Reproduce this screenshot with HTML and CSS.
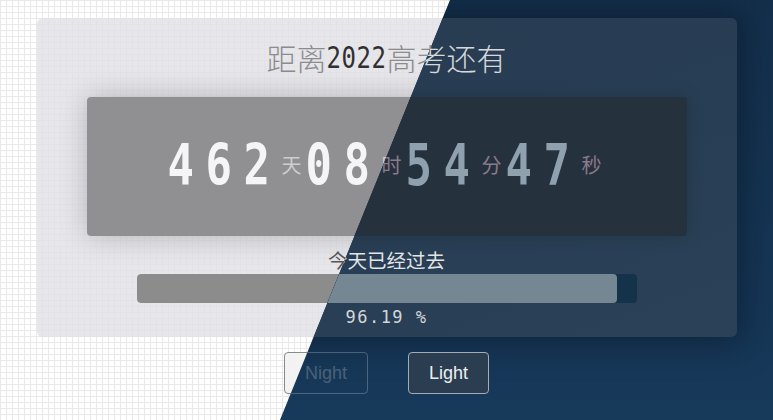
FILE: index.html
```html
<!DOCTYPE html>
<html lang="zh">
<head>
<meta charset="utf-8">
<title>距离2022高考还有</title>
<link rel="stylesheet" href="styles.css">
</head>
<body>
<div class="scene scene-light">
  <div class="card">
    <h1 class="title">距离<span class="year">2022</span>高考还有</h1>
    <div class="clock">
      <span class="num">462</span><span class="unit">天</span>
      <span class="num">08</span><span class="unit">时</span>
      <span class="num">54</span><span class="unit">分</span>
      <span class="num">47</span><span class="unit">秒</span>
    </div>
    <div class="label">今天已经过去</div>
    <div class="bar"><div class="fill" style="width:96.19%"></div></div>
    <div class="percent">96.19 %</div>
  </div>
  <div class="buttons">
    <button class="btn btn-night">Night</button>
    <button class="btn btn-light">Light</button>
  </div>
</div>
<div class="scene scene-dark" aria-hidden="true">
  <div class="card">
    <h1 class="title">距离<span class="year">2022</span>高考还有</h1>
    <div class="clock">
      <span class="num">462</span><span class="unit">天</span>
      <span class="num">08</span><span class="unit">时</span>
      <span class="num">54</span><span class="unit">分</span>
      <span class="num">47</span><span class="unit">秒</span>
    </div>
    <div class="label">今天已经过去</div>
    <div class="bar"><div class="fill" style="width:96.19%"></div></div>
    <div class="percent">96.19 %</div>
  </div>
  <div class="buttons">
    <button class="btn btn-night">Night</button>
    <button class="btn btn-light">Light</button>
  </div>
</div>
</body>
</html>
```
FILE: styles.css
```css
html, body {
  margin: 0;
  padding: 0;
  width: 773px;
  height: 420px;
  overflow: hidden;
}
body {
  position: relative;
  font-family: "Noto Sans CJK SC", "Noto Sans", sans-serif;
}
.scene {
  width: 773px;
  height: 420px;
  box-sizing: border-box;
  padding-top: 18px;
  display: flex;
  flex-direction: column;
  align-items: center;
}
.scene-light {
  background-color: #ffffff;
  background-image:
    linear-gradient(#e9e9e9 1px, transparent 1px),
    linear-gradient(90deg, #e9e9e9 1px, transparent 1px);
  background-size: 6px 6px;
}
.scene-dark {
  position: absolute;
  top: 0;
  left: 0;
  background: linear-gradient(180deg, #142f4b 0%, #17395a 100%);
  clip-path: polygon(450px 0, 773px 0, 773px 420px, 280px 420px);
}
.card {
  width: 700px;
  height: 319px;
  box-sizing: border-box;
  padding: 19px 50px 0;
  border-radius: 6px;
  display: flex;
  flex-direction: column;
  align-items: center;
}
.scene-light .card {
  background: rgba(226, 224, 230, 0.82);
}
.scene-dark .card {
  background: linear-gradient(160deg, #283c51 0%, #283e54 60%, #2a4157 100%);
  box-shadow: 0 0 32px 6px rgba(8, 22, 40, 0.55);
}
.title {
  margin: 0;
  font-size: 30px;
  line-height: 40px;
  font-weight: 300;
  letter-spacing: 0;
}
.scene-light .title { color: #8c8c8e; }
.scene-dark .title { color: #d6d8db; }
.year {
  display: inline-block;
  font-family: "DejaVu Sans Mono", monospace;
  font-size: 24px;
  line-height: 1;
  letter-spacing: 0.6px;
  transform: scaleY(1.25);
  transform-origin: 50% 20px;
  vertical-align: 2px;
}
.scene-light .year { color: #303032; }
.scene-dark .year { color: #e4e4e4; }
.clock {
  margin-top: 20px;
  width: 600px;
  height: 139px;
  box-sizing: border-box;
  padding-bottom: 3px;
  border-radius: 4px;
  display: flex;
  align-items: center;
  justify-content: center;
}
.scene-light .clock {
  background: rgba(134, 134, 138, 0.9);
  box-shadow: 0 0 28px rgba(0, 0, 0, 0.22);
}
.scene-dark .clock {
  background: #26313e;
  box-shadow: 0 0 18px rgba(0, 0, 0, 0.15);
}
.num {
  display: inline-block;
  font-family: "DejaVu Sans Mono", monospace;
  font-weight: bold;
  font-size: 44px;
  line-height: 1;
  letter-spacing: 11.5px;
  transform: scaleY(1.31);
}
.scene-light .num { color: #f5f5f7; }
.scene-dark .num { color: #8fa1af; }
.unit {
  font-size: 20px;
  line-height: 24px;
  margin-right: 4px;
}
.scene-light .unit { color: #cdcdcf; }
.scene-dark .unit { color: #8c7a8b; }
.label {
  margin-top: 12px;
  font-size: 19.5px;
  line-height: 24px;
}
.scene-light .label { color: #555557; }
.scene-dark .label { color: #e2e4e6; }
.bar {
  margin-top: 2px;
  width: 500px;
  height: 29px;
  border-radius: 4px;
  overflow: hidden;
}
.fill {
  height: 100%;
  border-radius: 4px;
}
.scene-light .bar { background: rgba(0, 0, 0, 0.12); }
.scene-light .fill { background: #8c8c8c; }
.scene-dark .bar { background: #15324b; }
.scene-dark .fill { background: #758792; }
.percent {
  margin-top: 4px;
  font-family: "DejaVu Sans Mono", monospace;
  font-size: 17px;
  line-height: 20px;
  letter-spacing: 1.5px;
}
.scene-light .percent { color: #555; }
.scene-dark .percent { color: #d4d6d8; }
.buttons {
  margin-top: 15px;
  display: flex;
  gap: 40px;
}
.btn {
  height: 42px;
  box-sizing: border-box;
  padding: 0 20px;
  border-radius: 4px;
  font-family: "Liberation Sans", Arial, sans-serif;
  font-size: 18px;
  line-height: 40px;
  cursor: pointer;
}
.scene-light .btn-night {
  background: rgba(242, 242, 242, 0.95);
  border: 1px solid #8a8a8a;
  color: #333;
}
.scene-light .btn-light {
  background: #f4f4f4;
  border: 1px solid #8a8a8a;
  color: #333;
}
.scene-dark .btn-night {
  background: transparent;
  border: 1px solid rgba(200, 210, 220, 0.3);
  color: #4b6178;
}
.scene-dark .btn-light {
  background: #2b3e51;
  border: 1px solid #a4adb6;
  color: #eceef0;
}
```
